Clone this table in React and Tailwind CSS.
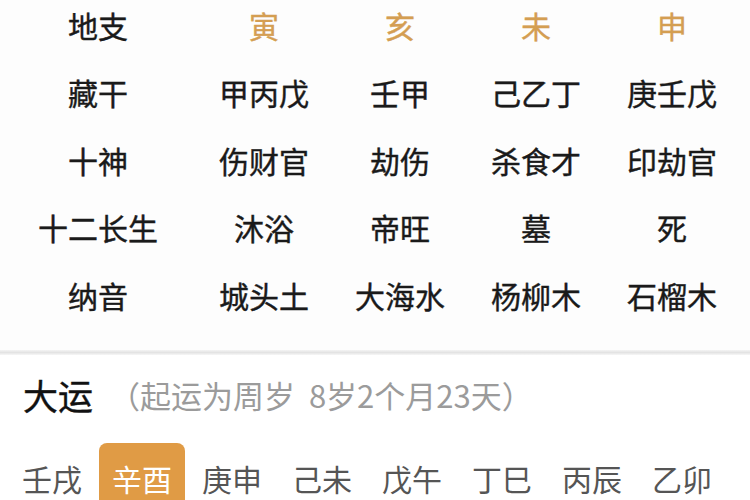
import React from "react";

const rows = [
  ["地支", "寅", "亥", "未", "申"],
  ["藏干", "甲丙戊", "壬甲", "己乙丁", "庚壬戊"],
  ["十神", "伤财官", "劫伤", "杀食才", "印劫官"],
  ["十二长生", "沐浴", "帝旺", "墓", "死"],
  ["纳音", "城头土", "大海水", "杨柳木", "石榴木"],
];

const yun = ["壬戌", "辛酉", "庚申", "己未", "戊午", "丁巳", "丙辰", "乙卯"];

export default function App() {
  return (
    <div
      className="w-[750px] h-[500px] overflow-hidden bg-white text-[#1a1a1a]"
      style={{ fontFamily: '"Noto Sans CJK SC", "Noto Sans", sans-serif' }}
    >
      <div className="-mt-[9px] grid grid-cols-[196px_repeat(4,136px)] bg-[#fdfdfd]">
        {rows.map((r, i) =>
          r.map((c, j) => (
            <div
              key={i + "-" + j}
              className={
                "h-[67.5px] flex items-center justify-center text-[30px] leading-none [-webkit-text-stroke:0.4px_currentColor] " +
                (i === 0 && j > 0 ? "text-[#d49e52]" : "text-[#1a1a1a]")
              }
            >
              {c}
            </div>
          ))
        )}
      </div>
      <div className="h-[21px] bg-[#fdfdfd]" />
      <div className="h-[5px] bg-gradient-to-b from-[#f4f4f4] via-[#e3e3e3] to-[#f7f7f7]" />
      <div className="h-[80px] flex items-center pl-[23px]">
        <span className="text-[35px] leading-none text-[#111] [-webkit-text-stroke:0.4px_currentColor]">大运</span>
        <span className="ml-[16px] text-[31px] leading-none text-[#9b9b9b] whitespace-pre">
          （起运为周岁  8岁2个月23天）
        </span>
      </div>
      <div className="mt-[8px] flex gap-[4px] pl-[9px]">
        {yun.map((y, i) => (
          <div
            key={y}
            className={
              "w-[86px] h-[60px] pt-[20px] flex justify-center rounded-t-[8px] text-[30px] leading-none " +
              (i === 1 ? "bg-[#e09b45] text-white" : "text-[#555]")
            }
          >
            {y}
          </div>
        ))}
      </div>
    </div>
  );
}
